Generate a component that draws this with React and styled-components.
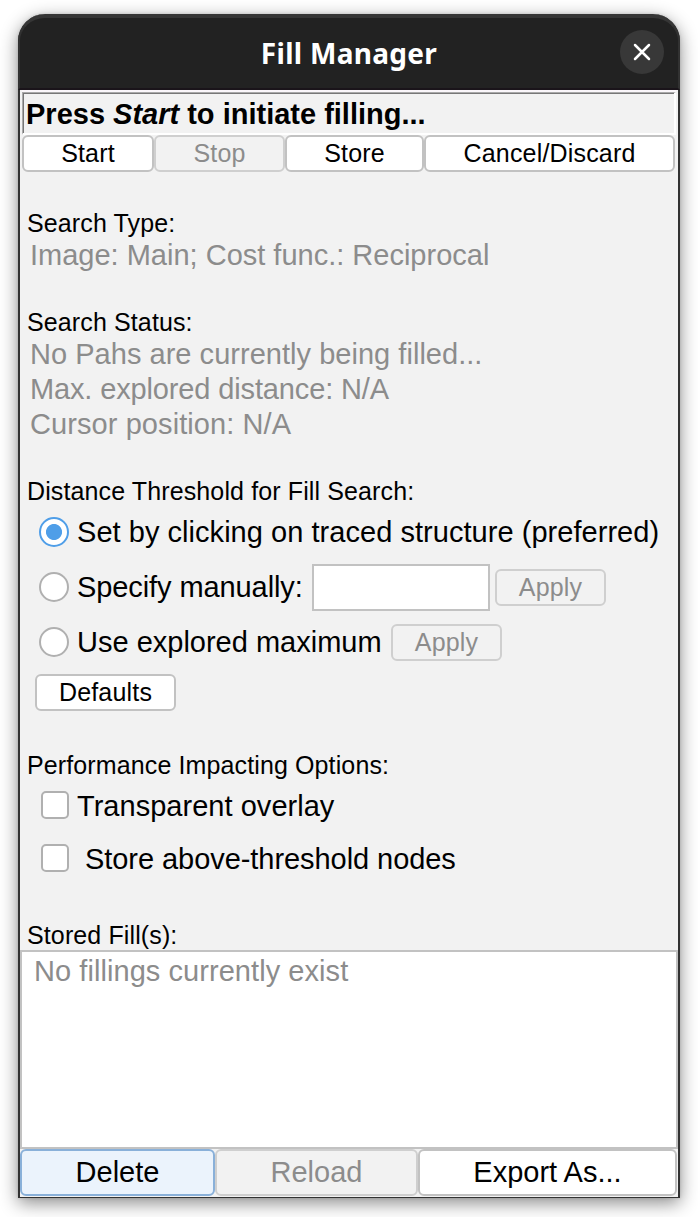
import React from "react";
import styled, { createGlobalStyle } from "styled-components";

const GlobalStyle = createGlobalStyle`
  * { box-sizing: border-box; }
  body {
    margin: 0;
    background: #fff;
    font-family: "Liberation Sans", Arial, sans-serif;
    color: #000;
  }
  #root { overflow: hidden; height: 1217px; }
`;

const Dialog = styled.div`
  width: 662px;
  height: 1184px;
  margin: 14px 0 0 18px;
  display: flex;
  flex-direction: column;
  background: #f2f2f2;
  border: 2px solid #323232;
  border-top: 0;
  border-bottom-width: 1px;
  border-radius: 27px 27px 0 0;
  box-shadow: 0 5px 18px rgba(0, 0, 0, 0.46), 0 0 3px rgba(0, 0, 0, 0.15);
`;

const TitleBar = styled.header`
  height: 76px;
  flex: none;
  margin: 0 -2px;
  border: 2px solid #323232;
  border-top: 4px solid #363636;
  border-bottom: 2px solid #1a141a;
  border-radius: 27px 27px 0 0;
  background: #222;
  display: grid;
  grid-template-columns: 58px 1fr 58px;
  align-items: center;
`;

const Title = styled.h1`
  grid-column: 2;
  margin: 0;
  text-align: center;
  font: bold 28px/40px "Noto Sans", sans-serif;
  letter-spacing: ${(p) => p.$ls}px;
  white-space: nowrap;
  color: #fff;
`;

const CloseButton = styled.button`
  width: 44px;
  height: 44px;
  margin-bottom: 3px;
  padding: 0;
  border: 0;
  border-radius: 50%;
  background: #383838;
  display: grid;
  place-items: center;
`;

const StatusBar = styled.div`
  flex: none;
  height: 43px;
  margin: 2px 2px 0;
  border: 1px solid #aaa;
  border-right: 2px solid #fff;
  border-bottom: 2px solid #fff;
  box-shadow: inset 1px 1px 0 #777, 0 -2px 0 #faf6fa;
  padding-left: 3px;
  font-size: 29px;
  font-weight: bold;
  line-height: 43px;
  white-space: nowrap;
`;

const ButtonRow = styled.div`
  flex: none;
  display: grid;
  grid-template-columns: ${(p) => p.$columns};
  margin-left: ${(p) => p.$inset || 0}px;
`;

const Button = styled.button`
  height: ${(p) => (p.$large ? 47 : 37)}px;
  width: ${(p) => (p.$width ? p.$width + "px" : "auto")};
  flex: none;
  padding: 0;
  border: 2px solid #c2c2c2;
  border-radius: 6px;
  background: #fff;
  color: #000;
  font-family: inherit;
  font-size: ${(p) => (p.$large ? 29 : 25)}px;
  letter-spacing: ${(p) => (p.$large ? 0 : 0.18)}px;
  line-height: 33px;
  white-space: nowrap;

  &:disabled {
    border-color: #cfcfcf;
    background: #f2f2f2;
    color: #8c8c8c;
  }
  ${(p) => p.$focused && "border-color: #89b0d9; background: #ebf3fc;"}
`;

const Section = styled.section`
  flex: none;
  margin-top: ${(p) => p.$gap}px;
`;

const SectionLabel = styled.h2`
  margin: 0;
  padding-left: 7px;
  height: ${(p) => p.$height || 28}px;
  font-size: 25px;
  font-weight: normal;
  line-height: 28px;
  letter-spacing: 0.12px;
  white-space: nowrap;
`;

const Info = styled.p`
  margin: 0;
  padding-left: 10px;
  font-size: 29px;
  line-height: 35px;
  letter-spacing: ${(p) => p.$ls || 0}px;
  white-space: nowrap;
  color: #8c8c8c;
`;

const OptionRow = styled.div`
  display: flex;
  align-items: center;
  height: ${(p) => p.$height}px;
  padding-left: ${(p) => p.$indent}px;
  font-size: 29px;
  white-space: nowrap;
`;

const Radio = styled.span`
  width: 30px;
  height: 30px;
  flex: none;
  margin-bottom: 1px;
  border: 2px solid ${(p) => (p.$checked ? "#4f9ee8" : "#b0b0b0")};
  border-radius: 50%;
  background: ${(p) =>
    p.$checked ? "radial-gradient(circle, #4f9ee8 7.6px, #fff 8.4px)" : "#fff"};
`;

const Checkbox = styled.span`
  width: 28px;
  height: 28px;
  flex: none;
  margin-bottom: 1px;
  border: 2px solid #b0b0b0;
  border-radius: 5px;
  background: #fff;
`;

const OptionText = styled.span`
  margin: ${(p) => p.$drop || 0}px 0 0 ${(p) => p.$before || 8}px;
  width: ${(p) => (p.$width ? p.$width + "px" : "auto")};
  line-height: 35px;
  letter-spacing: ${(p) => p.$ls || 0}px;
`;

const DistanceInput = styled.input`
  width: 178px;
  height: 47px;
  margin-right: 5px;
  border: 2px solid #c2c2c2;
  background: #fff;
  font-size: 29px;
`;

const DefaultsRow = styled.div`
  padding: 4px 0 0 15px;
  display: flex;
`;

const FillList = styled.div`
  flex: none;
  height: 199px;
  border: 2px solid #c2c2c2;
  background: #fff;
  padding: 2px;
`;

export default function App() {
  return (
    <>
      <GlobalStyle />
      <Dialog>
        <TitleBar>
          <Title $ls={0.3}>Fill Manager</Title>
          <CloseButton aria-label="Close">
            <svg width="18" height="18" viewBox="0 0 18 18">
              <path d="M2 2L16 16M16 2L2 16" stroke="#fff" strokeWidth="2.5" strokeLinecap="round" />
            </svg>
          </CloseButton>
        </TitleBar>
        <StatusBar>
          Press <em>Start</em> to initiate filling...
        </StatusBar>
        <ButtonRow $columns="132px 131px 139px 251px" $inset={2}>
          <Button>Start</Button>
          <Button disabled>Stop</Button>
          <Button>Store</Button>
          <Button>Cancel/Discard</Button>
        </ButtonRow>

        <Section $gap={37}>
          <SectionLabel $height={29}>Search Type:</SectionLabel>
          <Info>Image: Main; Cost func.: Reciprocal</Info>
        </Section>

        <Section $gap={35}>
          <SectionLabel $height={29}>Search Status:</SectionLabel>
          <Info $ls={0.03}>No Pahs are currently being filled...</Info>
          <Info $ls={-0.14}>Max. explored distance: N/A</Info>
          <Info $ls={0.08}>Cursor position: N/A</Info>
        </Section>

        <Section $gap={35}>
          <SectionLabel>Distance Threshold for Fill Search:</SectionLabel>
          <OptionRow $height={55} $indent={19}>
            <Radio $checked />
            <OptionText $ls={0.04}>Set by clicking on traced structure (preferred)</OptionText>
          </OptionRow>
          <OptionRow $height={55} $indent={19}>
            <Radio />
            <OptionText $width={235} $ls={-0.09}>Specify manually:</OptionText>
            <DistanceInput />
            <Button disabled $width={111}>Apply</Button>
          </OptionRow>
          <OptionRow $height={55} $indent={19}>
            <Radio />
            <OptionText $width={314}>Use explored maximum</OptionText>
            <Button disabled $width={111}>Apply</Button>
          </OptionRow>
          <DefaultsRow>
            <Button $width={141}>Defaults</Button>
          </DefaultsRow>
        </Section>

        <Section $gap={40}>
          <SectionLabel>Performance Impacting Options:</SectionLabel>
          <OptionRow $height={53} $indent={21}>
            <Checkbox />
            <OptionText $drop={2} $ls={0.03}>Transparent overlay</OptionText>
          </OptionRow>
          <OptionRow $height={53} $indent={21}>
            <Checkbox />
            <OptionText $drop={2} $before={16} $ls={-0.06}>Store above-threshold nodes</OptionText>
          </OptionRow>
        </Section>

        <Section $gap={36}>
          <SectionLabel $height={29}>Stored Fill(s):</SectionLabel>
          <FillList>
            <Info $ls={0.06}>No fillings currently exist</Info>
          </FillList>
        </Section>

        <ButtonRow $columns="195px 203px 259px">
          <Button $large $focused>Delete</Button>
          <Button $large disabled>Reload</Button>
          <Button $large>Export As...</Button>
        </ButtonRow>
      </Dialog>
    </>
  );
}
